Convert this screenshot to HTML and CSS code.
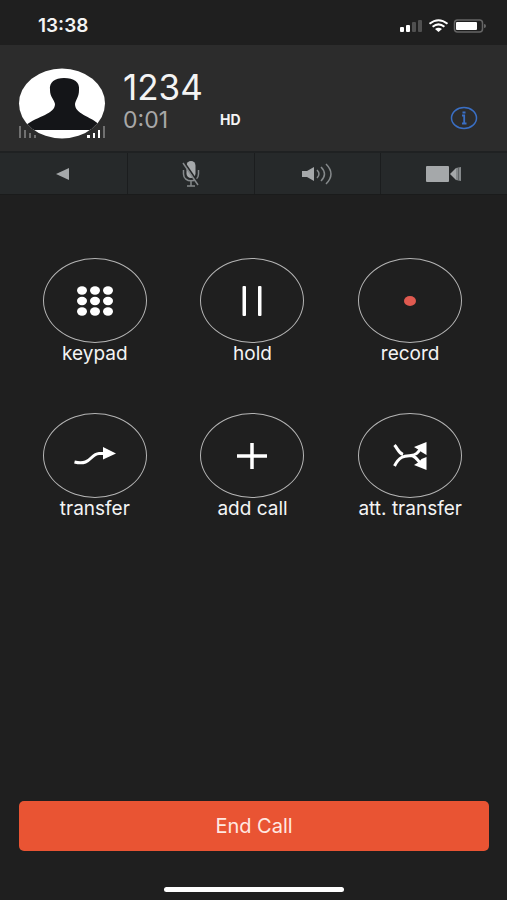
FILE: index.html
```html
<!DOCTYPE html>
<html lang="en">
<head>
  <meta charset="utf-8">
  <meta name="viewport" content="width=device-width, initial-scale=1">
  <title>Call</title>
  <link rel="stylesheet" href="styles.css">
</head>
<body>
  <div class="status-bar">
    <span class="clock">13:38</span>
    <svg class="status-icons" width="86" height="14" viewBox="0 0 86 14">
      <g fill="#fff">
        <rect x="0" y="8" width="4" height="5" rx="1"/>
        <rect x="6" y="6" width="4" height="7" rx="1"/>
      </g>
      <g fill="#505050">
        <rect x="12" y="3" width="4" height="10" rx="1"/>
        <rect x="18" y="1" width="4" height="12" rx="1"/>
      </g>
      <g fill="none" stroke="#fff" stroke-width="2">
        <path d="M29.500 4.800Q38.500-2.400 47.500 4.800"/>
        <path d="M32.600 7.800Q38.500 3 44.400 7.800"/>
      </g>
      <path d="M35 10Q38.500 7.600 42 10L38.500 13Z" fill="#fff"/>
      <rect x="54.500" y="1" width="28" height="12" rx="3" fill="none" stroke="#666" stroke-width="1.500"/>
      <rect x="56" y="3" width="21" height="8" rx="1" fill="#fff"/>
      <path d="M84 5Q86 5 86 7T84 9Z" fill="#666"/>
    </svg>
  </div>

  <header class="caller">
    <svg class="avatar" width="88" height="72" viewBox="0 0 88 72">
      <clipPath id="face"><ellipse cx="44" cy="35.500" rx="43" ry="35"/></clipPath>
      <ellipse cx="44" cy="35.500" rx="43" ry="35" fill="#fff"/>
      <path clip-path="url(#face)" fill="#141518" d="M46 10C37 10 31 14 32 22C32 29 36 31 37 36C37 46 20 48 8 57V62H82V57C72 48 57 46 57 36C58 31 61 29 61 22C62 14 56 10 46 10Z"/>
      <g fill="#707070">
        <rect x="1" y="58" width="2" height="12"/>
        <rect x="6" y="62" width="2" height="8"/>
        <rect x="11" y="65" width="2" height="5"/>
        <rect x="16" y="67" width="2" height="3"/>
        <rect x="85" y="58" width="2" height="12"/>
      </g>
      <g fill="#fff">
        <rect x="69" y="67" width="3" height="3"/>
        <rect x="75" y="65" width="2" height="5"/>
        <rect x="80" y="62" width="2" height="8"/>
      </g>
    </svg>
    <div class="caller-text">
      <h1>1234</h1>
      <p><span class="timer">0:01</span><span class="hd">HD</span></p>
    </div>
    <button class="info" aria-label="Info">
      <svg width="28" height="24" viewBox="0 0 28 24" fill="none" stroke="#3a6fc4">
        <ellipse cx="14" cy="12" rx="12.500" ry="10.500" stroke-width="1.500"/>
        <path d="M12 9.500H14.200V17.500M12 17.500H16.500" stroke-width="1.800"/>
        <path d="M14 5.500V7.500" stroke-width="3"/>
      </svg>
    </button>
  </header>

  <nav class="toolbar">
    <button aria-label="Back">
      <svg width="14" height="14" viewBox="0 0 14 14"><path d="M0 7L13 1V13Z" fill="#a5a8aa"/></svg>
    </button>
    <button aria-label="Mute">
      <svg width="18" height="28" viewBox="0 0 18 28">
        <rect x="4.500" y="1" width="9" height="17" rx="4.500" fill="#a5a8aa"/>
        <path d="M1.500 10V14C1.500 23 16.500 23 16.500 14V10M9 21V26M5 26H13" fill="none" stroke="#85898b" stroke-width="1.500"/>
        <path d="M2 2L17 24" stroke="#262829" stroke-width="2"/>
        <path d="M1 3L16 25" stroke="#85898b" stroke-width="1.500"/>
      </svg>
    </button>
    <button aria-label="Speaker">
      <svg width="32" height="24" viewBox="0 0 32 24">
        <path d="M1 9H6L13 5V19L6 15H1Z" fill="#a5a8aa"/>
        <path d="M16 8Q20 12 16 16M20 5Q27 12 20 19M25 2Q35 12 25 22" fill="none" stroke="#85898b" stroke-width="1.500"/>
      </svg>
    </button>
    <button aria-label="Video">
      <svg width="36" height="18" viewBox="0 0 36 18">
        <rect x="0" y="1" width="23" height="16" rx="1" fill="#a5a8aa"/>
        <path d="M24 9L30 3V15Z" fill="#a5a8aa"/>
        <path d="M30 3L35 2V16L30 15Z" fill="#85898b"/>
        <path d="M32.500 3V15" stroke="#606466"/>
      </svg>
    </button>
  </nav>

  <main class="actions">
    <button class="action">
      <span class="ring">
        <svg width="36" height="30" viewBox="0 0 36 30" fill="#fff">
          <ellipse cx="5" cy="4.500" rx="5" ry="4.200"/><ellipse cx="18" cy="4.500" rx="5" ry="4.200"/><ellipse cx="31" cy="4.500" rx="5" ry="4.200"/>
          <ellipse cx="5" cy="15" rx="5" ry="4.200"/><ellipse cx="18" cy="15" rx="5" ry="4.200"/><ellipse cx="31" cy="15" rx="5" ry="4.200"/>
          <ellipse cx="5" cy="25.500" rx="5" ry="4.200"/><ellipse cx="18" cy="25.500" rx="5" ry="4.200"/><ellipse cx="31" cy="25.500" rx="5" ry="4.200"/>
        </svg>
      </span>
      <span class="label">keypad</span>
    </button>
    <button class="action">
      <span class="ring">
        <svg width="20" height="30" viewBox="0 0 20 30" fill="#fff">
          <rect x="0.500" y="0" width="3.500" height="30" rx="1"/>
          <rect x="16" y="0" width="3.500" height="30" rx="1"/>
        </svg>
      </span>
      <span class="label">hold</span>
    </button>
    <button class="action">
      <span class="ring">
        <svg width="12" height="10" viewBox="0 0 12 10"><ellipse cx="6" cy="5" rx="6" ry="5" fill="#e05a50"/></svg>
      </span>
      <span class="label">record</span>
    </button>
    <button class="action">
      <span class="ring">
        <svg width="42" height="18" viewBox="0 0 42 18">
          <path d="M0.500 15C17 19 16 7 25 6.500H32" fill="none" stroke="#fff" stroke-width="3"/>
          <path d="M29 0L42 6.500L29 12.500Z" fill="#fff"/>
        </svg>
      </span>
      <span class="label">transfer</span>
    </button>
    <button class="action">
      <span class="ring">
        <svg width="30" height="26" viewBox="0 0 30 26"><path d="M15 0V26M0 13H30" stroke="#fff" stroke-width="3.500"/></svg>
      </span>
      <span class="label">add call</span>
    </button>
    <button class="action">
      <span class="ring">
        <svg width="34" height="28" viewBox="0 0 34 28">
          <path d="M1.500 3C5 7 5.500 11 10 12.500M1.500 24C7 13 13 14 18 13.500C23 13 25 11 28 6M18 13.500C22 14 24 17 28 22" fill="none" stroke="#fff" stroke-width="3"/>
          <path d="M33.500 0V13L28.500 10L26 8L21 5ZM33.500 28V15L28.500 17L26 20L21 23Z" fill="#fff"/>
        </svg>
      </span>
      <span class="label">att. transfer</span>
    </button>
  </main>

  <footer class="bottom">
    <button class="end-call">End Call</button>
    <div class="home-bar"></div>
  </footer>
</body>
</html>
```
FILE: styles.css
```css
* {
  box-sizing: border-box;
}

body {
  display: flex;
  flex-direction: column;
  min-height: 100vh;
  margin: 0;
  background-color: #1f1f1f;
  color: #f4f4f4;
  font-family: Inter, "Liberation Sans", sans-serif;
}

button {
  padding: 0;
  border: none;
  background: none;
  color: inherit;
  font-family: inherit;
  cursor: pointer;
}

svg {
  display: block;
}

.status-bar {
  display: flex;
  align-items: center;
  justify-content: space-between;
  height: 45px;
  padding: 6px 21px 0 38px;
}

.clock {
  font-size: 19px;
  font-weight: 600;
}

.caller {
  display: flex;
  align-items: center;
  height: 106px;
  padding: 12px 29px 0 18px;
  background-color: #2c2c2c;
}

.caller-text {
  flex: 1;
  padding: 0 0 6px 17px;
}

h1 {
  margin: 0;
  font-size: 35px;
  font-weight: 400;
  line-height: 38px;
}

.caller p {
  display: flex;
  align-items: center;
  margin: 0;
  line-height: 28px;
}

.timer {
  width: 97px;
  color: #a8a8a8;
  font-size: 23px;
}

.hd {
  font-size: 14px;
  font-weight: 700;
}

.info {
  margin-top: 28px;
}

.toolbar {
  display: grid;
  grid-template-columns: repeat(4, 1fr);
  height: 44px;
  border-top: 2px solid #1f2122;
  border-bottom: 1px solid #1a1b1b;
}

.toolbar button {
  display: flex;
  align-items: center;
  justify-content: center;
  background-color: #26292a;
  border-left: 1px solid #1b1d1e;
}

.toolbar button:first-child {
  border-left: none;
}

.actions {
  display: grid;
  grid-template-columns: repeat(3, 1fr);
  row-gap: 48px;
  padding: 63px 18px 48px 16px;
}

.action {
  display: flex;
  flex-direction: column;
  align-items: center;
}

.ring {
  display: flex;
  align-items: center;
  justify-content: center;
  width: 104px;
  height: 85px;
  border: 1px solid #b4b4b4;
  border-radius: 50%;
}

.label {
  font-size: 19px;
  line-height: 22px;
}

.bottom {
  display: flex;
  flex-direction: column;
  align-items: center;
  margin-top: auto;
  padding: 0 18px 8px 19px;
}

.end-call {
  width: 100%;
  height: 50px;
  border-radius: 5px;
  background-color: #e95433;
  color: #ffe9e2;
  font-size: 20px;
}

.home-bar {
  width: 180px;
  height: 5px;
  margin-top: 36px;
  border-radius: 3px;
  background-color: #fff;
}
```
